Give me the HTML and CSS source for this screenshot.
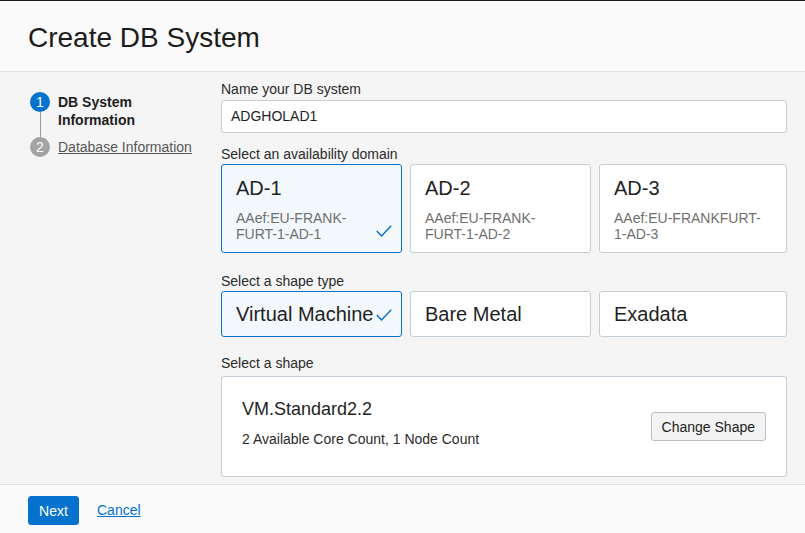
FILE: index.html
```html
<!DOCTYPE html>
<html lang="en">
<head>
<meta charset="utf-8">
<title>Create DB System</title>
<link rel="stylesheet" href="styles.css">
</head>
<body>
<div class="page">
  <header class="header">
    <h1 class="title">Create DB System</h1>
  </header>
  <main class="main">
    <nav class="steps">
      <div class="step step-first">
        <div class="marker"><span class="dot dot-active">1</span><span class="connector"></span></div>
        <div class="step-label step-current">DB System<br>Information</div>
      </div>
      <div class="step">
        <div class="marker"><span class="dot dot-idle">2</span></div>
        <a class="step-label step-link" href="#">Database Information</a>
      </div>
    </nav>
    <section class="form">
      <div class="field-label label-name">Name your DB system</div>
      <div class="text-input">ADGHOLAD1</div>

      <div class="field-label label-ad">Select an availability domain</div>
      <div class="choice-grid ad-grid">
        <div class="ad-card selected">
          <div class="ad-title">AD-1</div>
          <div class="ad-sub">AAef:EU-FRANK-<br>FURT-1-AD-1</div>
          <svg class="check" width="16" height="12" viewBox="0 0 16 12"><polyline points="0.8,6 5.5,11 15.2,0.8" fill="none" stroke="#0572ce" stroke-width="1.4"/></svg>
        </div>
        <div class="ad-card">
          <div class="ad-title">AD-2</div>
          <div class="ad-sub">AAef:EU-FRANK-<br>FURT-1-AD-2</div>
        </div>
        <div class="ad-card">
          <div class="ad-title">AD-3</div>
          <div class="ad-sub">AAef:EU-FRANKFURT-<br>1-AD-3</div>
        </div>
      </div>

      <div class="field-label label-type">Select a shape type</div>
      <div class="choice-grid type-grid">
        <div class="type-card selected">Virtual Machine
          <svg class="check" width="16" height="12" viewBox="0 0 16 12"><polyline points="0.8,6 5.5,11 15.2,0.8" fill="none" stroke="#0572ce" stroke-width="1.4"/></svg>
        </div>
        <div class="type-card">Bare Metal</div>
        <div class="type-card">Exadata</div>
      </div>

      <div class="field-label label-shape">Select a shape</div>
      <div class="shape-box">
        <div class="shape-info">
          <div class="shape-name">VM.Standard2.2</div>
          <div class="shape-desc">2 Available Core Count, 1 Node Count</div>
        </div>
        <button class="btn-secondary" type="button">Change Shape</button>
      </div>
    </section>
  </main>
  <footer class="footer">
    <button class="btn-primary" type="button">Next</button>
    <a class="cancel" href="#">Cancel</a>
  </footer>
</div>
</body>
</html>
```

FILE: styles.css
```css
* { box-sizing: border-box; }

html, body {
  margin: 0;
  padding: 0;
}

body {
  font-family: "Liberation Sans", Arial, sans-serif;
  color: #1f1f1f;
  background: #f5f5f5;
}

.page {
  width: 805px;
  height: 533px;
  display: flex;
  flex-direction: column;
  overflow: hidden;
}

.header {
  height: 72px;
  flex: none;
  background: #fafafa;
  border-top: 1px solid #161b22;
  border-bottom: 1px solid #e2e2e2;
  padding: 20px 28px 0;
}

.title {
  margin: 0;
  font-size: 28px;
  line-height: 34px;
  font-weight: normal;
  color: #1c1c1c;
  letter-spacing: 0;
}

.main {
  flex: 1;
  display: grid;
  grid-template-columns: 191px 566px;
  padding: 0 18px 0 30px;
  background: #f5f5f5;
  overflow: hidden;
}

/* left step navigation */
.steps {
  padding-top: 20px;
  display: flex;
  flex-direction: column;
}

.step {
  display: flex;
  gap: 8px;
}

.marker {
  width: 20px;
  flex: none;
  display: flex;
  flex-direction: column;
  align-items: center;
}

.dot {
  width: 20px;
  height: 20px;
  border-radius: 50%;
  color: #fff;
  font-size: 14px;
  line-height: 20px;
  text-align: center;
  flex: none;
}

.dot-active { background: #0572ce; }
.dot-idle { background: #a3a3a3; }

.connector {
  flex: 1;
  width: 1px;
  background: #9c9c9c;
  min-height: 25px;
}

.step-label {
  font-size: 14px;
  line-height: 18px;
  margin-top: 1px;
}

.step-current {
  font-weight: bold;
  color: #202020;
  padding-bottom: 8px;
}

.step-link {
  color: #555;
  text-decoration: underline;
}

/* right form */
.form {
  padding-top: 8px;
  display: flex;
  flex-direction: column;
}

.field-label {
  font-size: 14px;
  line-height: 18px;
  color: #2b2b2b;
}

.label-name { margin-bottom: 2px; }
.label-ad { margin-bottom: 1px; }
.label-type { margin-bottom: 1px; }
.label-shape { margin-bottom: 4px; }

.text-input {
  height: 33px;
  background: #fff;
  border: 1px solid #c4ced7;
  border-radius: 3px;
  padding: 0 9px;
  font-size: 14px;
  line-height: 31px;
  color: #1f1f1f;
  margin-bottom: 12px;
}

.choice-grid {
  display: grid;
  grid-template-columns: 181px 181px 1fr;
  gap: 8px;
}

.ad-grid { margin-bottom: 19px; }
.type-grid { margin-bottom: 17px; }

.ad-card,
.type-card {
  position: relative;
  background: #fff;
  border: 1px solid #c4ced7;
  border-radius: 3px;
}

.ad-card.selected,
.type-card.selected {
  border-color: #0572ce;
  background: #f3f8fc;
}

.ad-card {
  height: 89px;
  padding: 11px 14px 10px;
}

.ad-title {
  font-size: 20px;
  line-height: 24px;
  color: #1f1f1f;
  margin-bottom: 10px;
}

.ad-sub {
  font-size: 14px;
  line-height: 16px;
  color: #6f6f6f;
}

.type-card {
  height: 46px;
  padding: 0 14px;
  display: flex;
  align-items: center;
  font-size: 20px;
  color: #1f1f1f;
}

.check {
  position: absolute;
  right: 9px;
  bottom: 15px;
}

.shape-box {
  height: 101px;
  background: #fff;
  border: 1px solid #c4ced7;
  border-radius: 3px;
  padding: 21px 20px 28px;
  display: flex;
  justify-content: space-between;
  align-items: flex-start;
}

.shape-name {
  font-size: 18px;
  line-height: 22px;
  color: #1f1f1f;
  margin-bottom: 10px;
}

.shape-desc {
  font-size: 14px;
  line-height: 18px;
  color: #2b2b2b;
}

.btn-secondary {
  align-self: center;
  margin-top: 7px;
  height: 29px;
  padding: 0 10px;
  font-family: inherit;
  font-size: 14px;
  color: #222;
  background: #f3f3f3;
  border: 1px solid #b9c0c7;
  border-radius: 3px;
}

/* footer */
.footer {
  height: 49px;
  flex: none;
  background: #fafafa;
  border-top: 1px solid #dedede;
  padding: 11px 28px 0;
  display: flex;
  align-items: flex-start;
  gap: 18px;
}

.btn-primary {
  width: 51px;
  height: 29px;
  padding: 0;
  font-family: inherit;
  font-size: 14px;
  color: #fff;
  background: #0572ce;
  border: 1px solid #0572ce;
  border-radius: 3px;
}

.cancel {
  font-size: 14px;
  line-height: 29px;
  color: #0572ce;
  text-decoration: underline;
}
```
